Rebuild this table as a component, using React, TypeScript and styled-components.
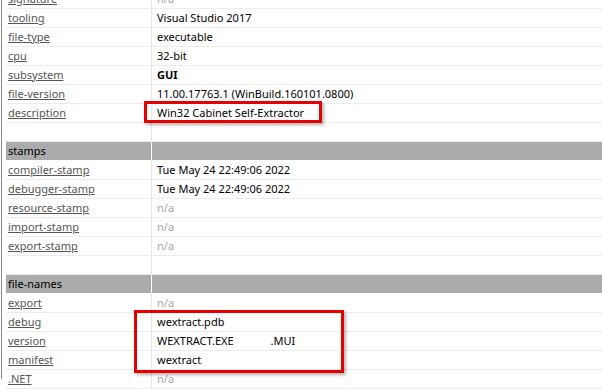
import styled, { createGlobalStyle } from "styled-components"

const GlobalStyle = createGlobalStyle`
    html, body {
        margin: 0;
        padding: 0;
        background: #ffffff;
    }
`

const PageStyle = styled.div`
    position: relative;
    width: 602px;
    height: 389px;
    overflow: hidden;
    background: #ffffff;
    font-family: "Noto Sans", "Open Sans", sans-serif;
    font-size: 11px;
`

const FrameStyle = styled.div`
    margin-left: 1px;
    border-left: 1px solid #8a8a8a;
    padding-left: 4px;
    height: 100%;
`

const TableStyle = styled.div`
    margin-top: -10px;
    display: flex;
    flex-direction: column;
`

const RowStyle = styled.div<{ $header?: boolean }>`
    display: grid;
    grid-template-columns: 146px 1fr;
    height: 18px;
    line-height: 18px;
    border-bottom: 1px solid ${(p) => (p.$header ? "#ffffff" : "#ececec")};
    background: ${(p) => (p.$header ? "#ababab" : "transparent")};
`

const KeyStyle = styled.div<{ $header?: boolean }>`
    padding-left: 2px;
    color: ${(p) => (p.$header ? "#000000" : "#555555")};
    text-decoration: ${(p) => (p.$header ? "none" : "underline")};
    border-right: 1px solid ${(p) => (p.$header ? "#ffffff" : "#e6e6e6")};
    white-space: nowrap;
`

const ValueStyle = styled.div<{ $muted?: boolean; $bold?: boolean }>`
    padding-left: 5px;
    color: ${(p) => (p.$muted ? "#a6a6a6" : "#000000")};
    font-weight: ${(p) => (p.$bold ? 700 : 400)};
    white-space: nowrap;
`

const GapStyle = styled.span`
    display: inline-block;
    width: 37px;
`

const MarkStyle = styled.div`
    position: absolute;
    border: 3px solid #e60000;
    box-shadow: 2px 2px 3px rgba(0, 0, 0, 0.3);
    pointer-events: none;
`

type Row = { key: string; value?: React.ReactNode; muted?: boolean; bold?: boolean; header?: boolean }

const rows: Row[] = [
    { key: "signature", value: "n/a", muted: true },
    { key: "tooling", value: "Visual Studio 2017" },
    { key: "file-type", value: "executable" },
    { key: "cpu", value: "32-bit" },
    { key: "subsystem", value: "GUI", bold: true },
    { key: "file-version", value: "11.00.17763.1 (WinBuild.160101.0800)" },
    { key: "description", value: "Win32 Cabinet Self-Extractor" },
    { key: "" },
    { key: "stamps", header: true },
    { key: "compiler-stamp", value: "Tue May 24 22:49:06 2022" },
    { key: "debugger-stamp", value: "Tue May 24 22:49:06 2022" },
    { key: "resource-stamp", value: "n/a", muted: true },
    { key: "import-stamp", value: "n/a", muted: true },
    { key: "export-stamp", value: "n/a", muted: true },
    { key: "" },
    { key: "file-names", header: true },
    { key: "export", value: "n/a", muted: true },
    { key: "debug", value: "wextract.pdb" },
    {
        key: "version",
        value: (
            <>
                WEXTRACT.EXE
                <GapStyle />
                .MUI
            </>
        ),
    },
    { key: "manifest", value: "wextract" },
    { key: ".NET", value: "n/a", muted: true },
]

export default function App() {
    return (
        <PageStyle>
            <GlobalStyle />
            <FrameStyle>
                <TableStyle>
                    {rows.map((row, i) => (
                        <RowStyle key={i} $header={row.header}>
                            <KeyStyle $header={row.header}>{row.key}</KeyStyle>
                            <ValueStyle $muted={row.muted} $bold={row.bold}>
                                {row.value}
                            </ValueStyle>
                        </RowStyle>
                    ))}
                </TableStyle>
            </FrameStyle>
            <MarkStyle style={{ left: 144, top: 101, width: 172, height: 16 }} />
            <MarkStyle style={{ left: 134, top: 310, width: 204, height: 57 }} />
        </PageStyle>
    )
}
